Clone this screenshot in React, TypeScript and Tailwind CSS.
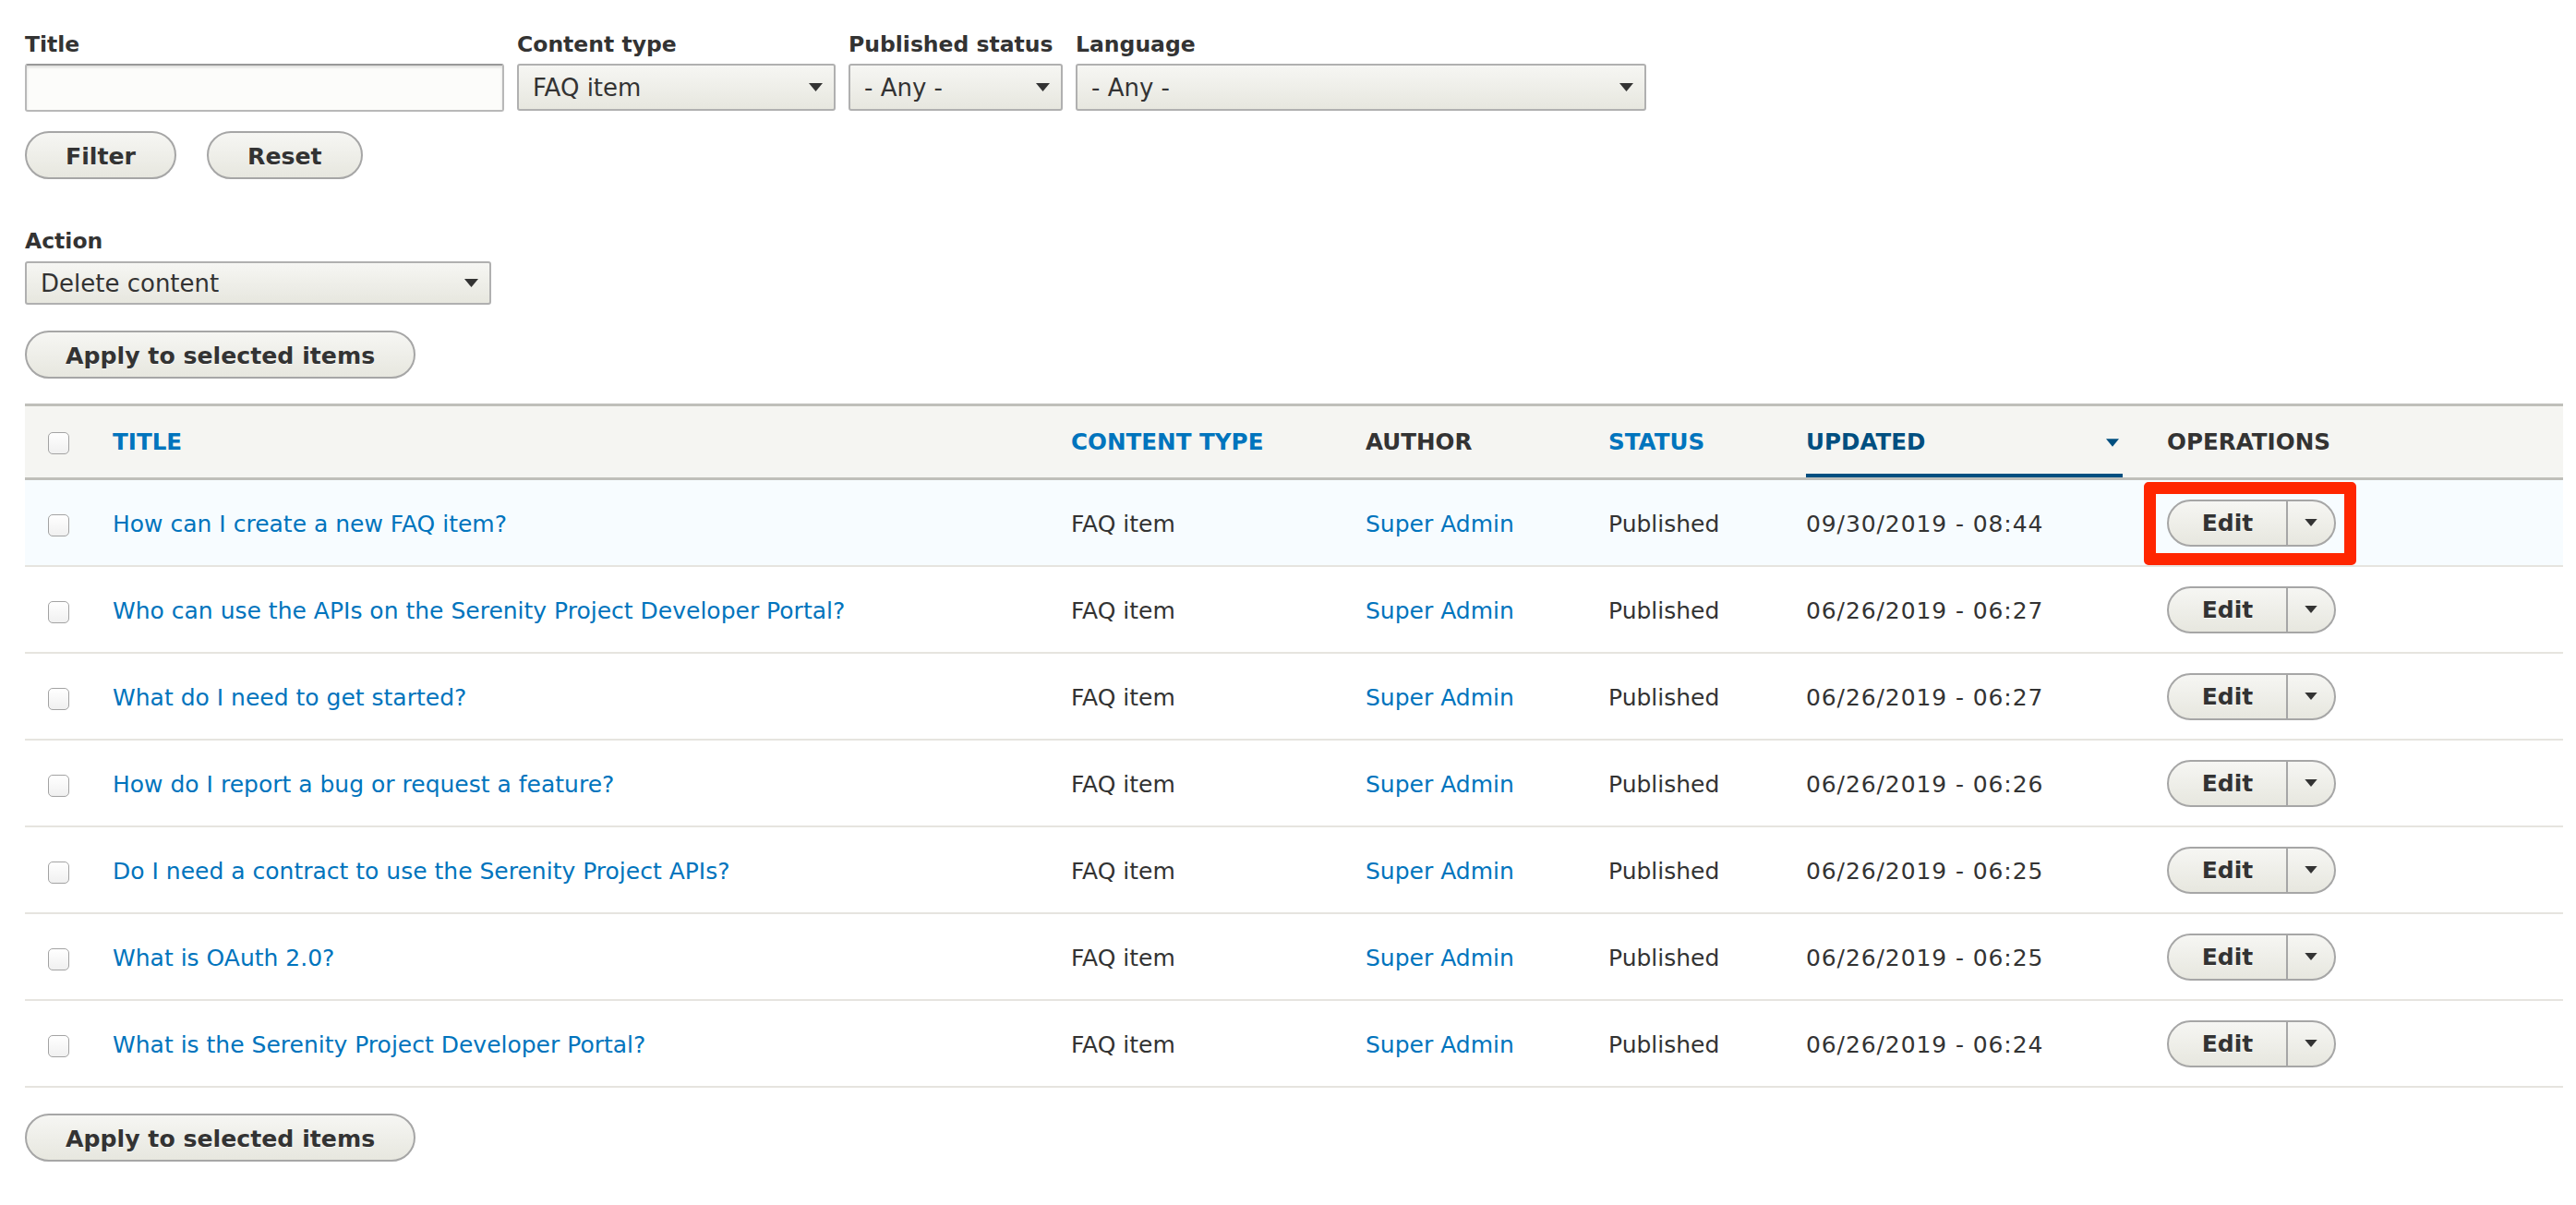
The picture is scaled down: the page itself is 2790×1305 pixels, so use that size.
import React from "react";

const Tri = ({ color = "#333333", w = 15, h = 9 }: { color?: string; w?: number; h?: number }) => (
  <svg width={w} height={h} viewBox="0 0 15 9" className="shrink-0">
    <path d="M0 0 L15 0 L7.5 9 Z" fill={color} />
  </svg>
);

function Select({ value, className }: { value: string; className: string }) {
  return (
    <div
      className={`flex items-center justify-between rounded-[3px] border-2 border-[#b0b0b0] bg-linear-to-b from-[#f6f6f3] to-[#e7e7df] pl-[15px] pr-[12px] text-[26px] text-[#333333] ${className}`}
    >
      <span className="pt-[1px]">{value}</span>
      <Tri />
    </div>
  );
}

function Btn({ children }: { children: React.ReactNode }) {
  return (
    <button className="h-[52px] rounded-full border-2 border-[#a6a6a6] bg-linear-to-b from-[#f6f6f3] to-[#e7e7df] px-[42px] pt-[3px] text-[25.2px] font-bold text-[#333333] [text-shadow:0_1px_rgba(255,255,255,0.6)]">
      {children}
    </button>
  );
}

function Label({ children }: { children: React.ReactNode }) {
  return <div className="text-[23.5px] font-bold leading-[30px] text-[#333333]">{children}</div>;
}

function Checkbox() {
  return (
    <div className="ml-[25px] h-[24px] w-[23px] rounded-[5px] border-[1.5px] border-[#a3a3a3] bg-linear-to-b from-white to-[#f0f0f0]" />
  );
}

function DropButton({ highlight }: { highlight?: boolean }) {
  return (
    <div className="relative w-[183px]">
      <div className="flex h-[51px] w-[183px] overflow-hidden rounded-full border-2 border-[#a6a6a6] bg-linear-to-b from-[#f6f6f3] to-[#e7e7df]">
        <div className="flex flex-1 items-center justify-center pt-[2px] text-[25px] font-bold text-[#333333] [text-shadow:0_1px_rgba(255,255,255,0.6)]">
          Edit
        </div>
        <div className="flex w-[52px] items-center justify-center border-l-2 border-[#a6a6a6]">
          <Tri w={14} h={8} />
        </div>
      </div>
      {highlight && (
        <div className="pointer-events-none absolute left-[-25px] top-[-19px] h-[90px] w-[230px] rounded-[5px] border-[13px] border-[#ff2600]" />
      )}
    </div>
  );
}

const rows = [
  { t: "How can I create a new FAQ item?", d: "09/30/2019 - 08:44" },
  { t: "Who can use the APIs on the Serenity Project Developer Portal?", d: "06/26/2019 - 06:27" },
  { t: "What do I need to get started?", d: "06/26/2019 - 06:27" },
  { t: "How do I report a bug or request a feature?", d: "06/26/2019 - 06:26" },
  { t: "Do I need a contract to use the Serenity Project APIs?", d: "06/26/2019 - 06:25" },
  { t: "What is OAuth 2.0?", d: "06/26/2019 - 06:25" },
  { t: "What is the Serenity Project Developer Portal?", d: "06/26/2019 - 06:24" },
];

const cols = "grid grid-cols-[74px_1038px_319px_263px_213px_386px_1fr]";

export default function App() {
  return (
    <div className="min-h-[1305px] bg-white pl-[27px] pr-[14px] pt-[33px] font-['DejaVu_Sans',sans-serif] text-[#333333]">
      {/* Filters */}
      <div className="flex gap-[14px]">
        <div className="w-[519px]">
          <Label>Title</Label>
          <div className="mt-[6px] h-[52px] w-full rounded-[3px] border-2 border-[#b8b8b8] border-t-[#999999] bg-[#fcfcfa] shadow-[inset_0_2px_3px_rgba(0,0,0,0.12)]" />
        </div>
        <div className="w-[345px]">
          <Label>Content type</Label>
          <Select value="FAQ item" className="mt-[6px] h-[51px] w-full" />
        </div>
        <div className="w-[232px]">
          <Label>Published status</Label>
          <Select value="- Any -" className="mt-[6px] h-[51px] w-full" />
        </div>
        <div className="w-[618px]">
          <Label>Language</Label>
          <Select value="- Any -" className="mt-[6px] h-[51px] w-full" />
        </div>
      </div>
      <div className="mt-[21px] flex gap-[33px]">
        <Btn>Filter</Btn>
        <Btn>Reset</Btn>
      </div>

      {/* Bulk action */}
      <div className="mt-[52px]">
        <Label>Action</Label>
        <Select value="Delete content" className="mt-[7px] h-[47px] w-[505px]" />
      </div>
      <div className="mt-[28px]">
        <Btn>Apply to selected items</Btn>
      </div>

      {/* Table */}
      <div className="mt-[27px] text-[25px]">
        <div className={`${cols} h-[83px] items-center border-y-[3px] border-[#bfbfba] bg-[#f5f5f2] text-[24.6px] font-bold uppercase`}>
          <div className="flex items-center pt-[3px]">
            <Checkbox />
          </div>
          <div className="pl-[21px] pt-[2px] text-[#0074bd]">Title</div>
          <div className="pl-[21px] pt-[2px] text-[#0074bd]">Content type</div>
          <div className="pl-[21px] pt-[2px] text-[#333333]">Author</div>
          <div className="pl-[21px] pt-[2px] text-[#0074bd]">Status</div>
          <div className="h-full pl-[22px] pr-[21px]">
            <div className="flex h-full items-center justify-between border-b-4 border-[#004f80] pt-[6px] text-[#004f80]">
              <span>Updated</span>
              <span className="pr-[4px]">
                <Tri color="#004f80" w={14} h={9} />
              </span>
            </div>
          </div>
          <div className="pl-[27px] pt-[2px] text-[#333333]">Operations</div>
        </div>
        {rows.map((r, i) => (
          <div
            key={i}
            className={`${cols} h-[94px] items-center border-b-2 border-[#e6e4df] ${i === 0 ? "bg-[#f7fcff]" : "bg-white"}`}
          >
            <div className="flex items-center pt-[5px]">
              <Checkbox />
            </div>
            <div className="pl-[21px] pt-[3px] text-[#0074bd]">{r.t}</div>
            <div className="pl-[21px] pt-[3px]">FAQ item</div>
            <div className="pl-[21px] pt-[3px] text-[#0074bd]">Super Admin</div>
            <div className="pl-[21px] pt-[3px]">Published</div>
            <div className="pl-[22px] pt-[3px] tracking-[0.9px]">{r.d}</div>
            <div className="pl-[27px]">
              <DropButton highlight={i === 0} />
            </div>
          </div>
        ))}
      </div>

      <div className="mt-[28px] pb-[20px]">
        <Btn>Apply to selected items</Btn>
      </div>
    </div>
  );
}
